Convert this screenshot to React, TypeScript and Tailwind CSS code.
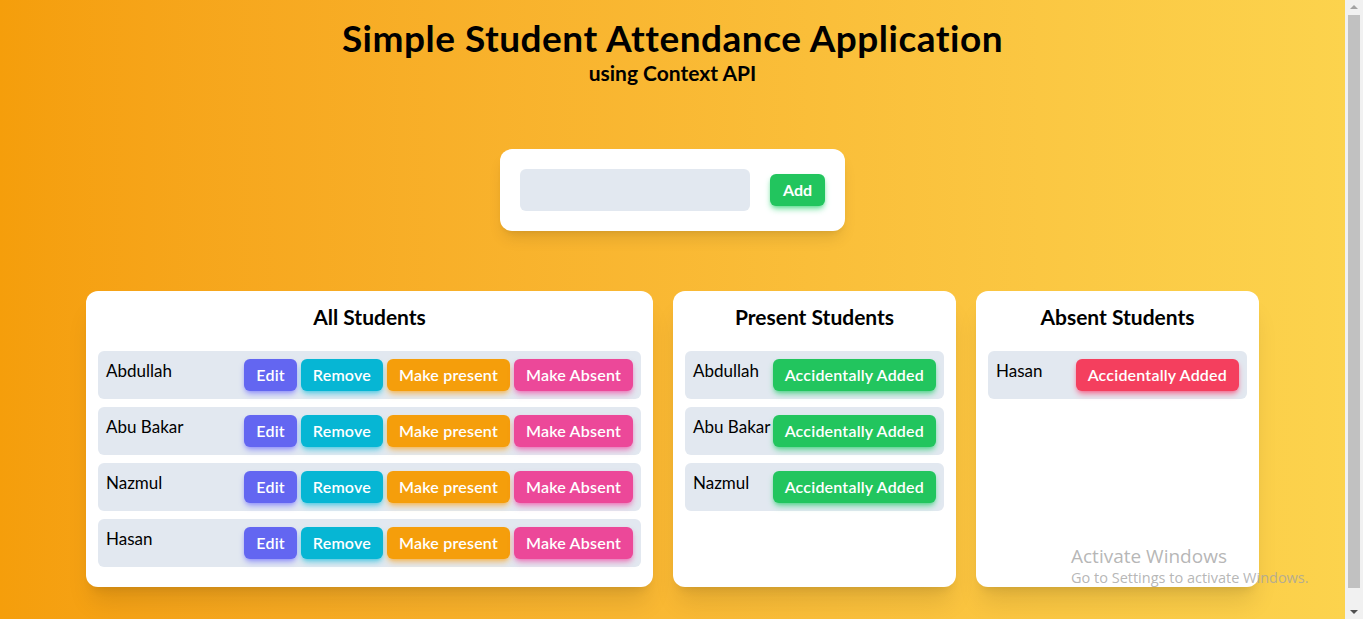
import type React from "react"

const allStudents = ["Abdullah", "Abu Bakar", "Nazmul", "Hasan"]
const presentStudents = ["Abdullah", "Abu Bakar", "Nazmul"]
const absentStudents = ["Hasan"]

export default function App() {
  return (
    <div className="flex h-[619px] w-full overflow-hidden font-['Lato',sans-serif] text-black [font-variant-ligatures:none]">
      <main className="relative flex-1 bg-gradient-to-r from-[#f59e0b] to-[#fcd34d]">
        <header className="pt-[18px] text-center">
          <h1 className="text-[37px] font-bold leading-10 tracking-[0.5px]">Simple Student Attendance Application</h1>
          <p className="mt-px text-[21px] font-bold leading-7">using Context API</p>
        </header>

        <div className="mt-[62px] flex justify-center">
          <form className="flex items-center gap-5 rounded-xl bg-white p-5 shadow-lg" onSubmit={(e) => e.preventDefault()}>
            <input className="h-[42px] w-[230px] rounded-md bg-[#e2e8f0] px-3 outline-none" />
            <button className="h-8 w-[55px] rounded-md bg-[#22c55e] font-bold text-white shadow-md shadow-green-500/50">Add</button>
          </form>
        </div>

        <div className="mt-[60px] flex items-start justify-center gap-5">
          <Card title="All Students" width="w-[567px]">
            {allStudents.map((name) => (
              <Row key={name} name={name}>
                <Btn className="bg-[#6366f1] shadow-indigo-500/50">Edit</Btn>
                <Btn className="bg-[#06b6d4] shadow-cyan-500/50">Remove</Btn>
                <Btn className="bg-[#f59e0b] shadow-amber-500/50">Make present</Btn>
                <Btn className="bg-[#ec4899] shadow-pink-500/50">Make Absent</Btn>
              </Row>
            ))}
          </Card>
          <Card title="Present Students" width="w-[283px] h-[296px]">
            {presentStudents.map((name) => (
              <Row key={name} name={name}>
                <Btn className="bg-[#22c55e] shadow-green-500/50">Accidentally Added</Btn>
              </Row>
            ))}
          </Card>
          <Card title="Absent Students" width="w-[283px] h-[296px]">
            {absentStudents.map((name) => (
              <Row key={name} name={name}>
                <Btn className="bg-[#f43f5e] shadow-rose-500/50">Accidentally Added</Btn>
              </Row>
            ))}
          </Card>
        </div>

        <div className="pointer-events-none absolute left-[1071px] top-[544px] font-['Open_Sans',sans-serif] text-[#a3a3a3]/80">
          <p className="text-[19px] leading-6">Activate Windows</p>
          <p className="text-[14.5px] leading-5">Go to Settings to activate Windows.</p>
        </div>
      </main>

      <div className="flex w-[18px] flex-col items-center bg-[#f1f1f1]">
        <div className="mt-[5px] h-0 w-0 border-x-4 border-b-4 border-x-transparent border-b-[#a3a3a3]" />
        <div className="mt-[6px] w-[12px] flex-1 bg-[#c1c1c1]" />
        <div className="mb-[5px] mt-[22px] h-0 w-0 border-x-4 border-t-4 border-x-transparent border-t-[#505050]" />
      </div>
    </div>
  )
}

function Card({ title, width, children }: { title: string; width: string; children: React.ReactNode }) {
  return (
    <section className={`${width} rounded-xl bg-white px-3 pb-5 pt-3 shadow-xl`}>
      <h2 className="mb-5 text-center text-[21px] font-bold leading-7">{title}</h2>
      <div className="flex flex-col gap-2">{children}</div>
    </section>
  )
}

function Row({ name, children }: { name: string; children: React.ReactNode }) {
  return (
    <div className="flex items-start justify-between rounded-md bg-[#e2e8f0] p-2">
      <span className="text-[17px] leading-6">{name}</span>
      <div className="flex gap-1">{children}</div>
    </div>
  )
}

function Btn({ className, children }: { className: string; children: React.ReactNode }) {
  return <button className={`${className} h-8 rounded-md px-3 font-semibold tracking-[0.2px] text-white shadow-md`}>{children}</button>
}
